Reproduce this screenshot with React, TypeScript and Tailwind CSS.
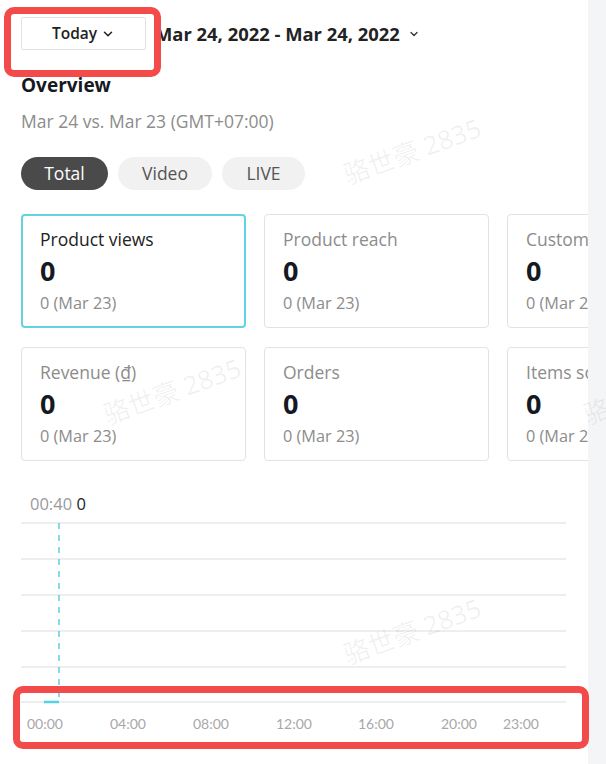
import { ChevronDown } from "lucide-react";

const cards = [
  [
    { title: "Product views", active: true },
    { title: "Product reach" },
    { title: "Customers" },
  ],
  [{ title: "Revenue (₫)" }, { title: "Orders" }, { title: "Items sold" }],
];

const ticks = [
  { label: "00:00", x: 24 },
  { label: "04:00", x: 107 },
  { label: "08:00", x: 190 },
  { label: "12:00", x: 273 },
  { label: "16:00", x: 355 },
  { label: "20:00", x: 438 },
  { label: "23:00", x: 500 },
];

const grid = [8, 44, 80, 116, 152, 187];

function MetricCard({ title, active }: { title: string; active?: boolean }) {
  return (
    <div
      className={
        "w-[225px] h-[114px] shrink-0 rounded-[4px] bg-white " +
        (active ? "border-2 border-[#63d3e2] pl-[17px] pt-[12px]" : "border border-[#e2e2e4] pl-[18px] pt-[13px]")
      }
    >
      <div className={"text-[17.5px] leading-[22px] whitespace-nowrap " + (active ? "text-[#222]" : "text-[#8c8c8c]")}>
        {title}
      </div>
      <div className="mt-[6px] text-[27px] leading-[30px] font-bold text-[#161823]">0</div>
      <div className="mt-[6px] text-[16.3px] leading-[22px] text-[#8c8c8c] whitespace-nowrap">0 (Mar 23)</div>
    </div>
  );
}

function Watermark({ className }: { className: string }) {
  return (
    <div
      className={
        "absolute pointer-events-none whitespace-nowrap -rotate-[20deg] text-[26px] leading-none text-black/[0.06] font-['Noto_Sans','Noto_Sans_CJK_SC',sans-serif] " +
        className
      }
    >
      骆世豪 2835
    </div>
  );
}

export default function App() {
  return (
    <div className="relative w-[606px] h-[764px] flex overflow-hidden bg-white font-['Open_Sans','Noto_Sans_CJK_SC',sans-serif]">
      <main className="w-[588px] shrink-0 overflow-hidden pl-[21px] pt-[17px]">
        <div className="flex items-center">
          <button className="w-[125px] h-[33px] flex items-center justify-center gap-[4px] border border-[#e3e3e5] rounded-[2px] bg-white text-[15.5px] font-semibold text-[#222]">
            Today
            <ChevronDown size={14} strokeWidth={2.6} />
          </button>
          <span className="ml-[9px] text-[18.4px] font-bold text-[#222] whitespace-nowrap">
            Mar 24, 2022 - Mar 24, 2022
          </span>
          <ChevronDown size={12} strokeWidth={2.6} className="ml-[8px] text-[#333]" />
        </div>

        <h2 className="mt-[23px] text-[19px] leading-[24px] font-bold text-[#161823]">Overview</h2>
        <p className="mt-[13px] text-[17.5px] leading-[22px] text-[#8c8c8c]">Mar 24 vs. Mar 23 (GMT+07:00)</p>

        <div className="mt-[25px] flex gap-[10px]">
          <span className="h-[33px] w-[87px] rounded-full bg-[#4a4a4a] text-white text-[17.5px] flex items-center justify-center">
            Total
          </span>
          <span className="h-[33px] w-[94px] rounded-full bg-[#f1f1f2] text-[#555] text-[17.5px] flex items-center justify-center">
            Video
          </span>
          <span className="h-[33px] w-[83px] rounded-full bg-[#f1f1f2] text-[#555] text-[17.5px] flex items-center justify-center">
            LIVE
          </span>
        </div>

        <div className="mt-[24px] flex flex-col gap-[19px]">
          {cards.map((row, i) => (
            <div key={i} className="flex gap-[18px]">
              {row.map((c) => (
                <MetricCard key={c.title} title={c.title} active={"active" in c ? c.active : false} />
              ))}
            </div>
          ))}
        </div>

        <div className="mt-[32px] ml-[9px] text-[16.5px] leading-[22px]">
          <span className="text-[#9a9a9a]">00:40</span> <span className="text-[#222]">0</span>
        </div>

        <svg width="567" height="240" className="block">
          {grid.map((y) => (
            <line key={y} x1="0" x2="545" y1={y} y2={y} stroke="#e9e9eb" strokeWidth="1.5" />
          ))}
          <line x1="38" x2="38" y1="8" y2="187" stroke="#5fd0e0" strokeWidth="1.5" strokeDasharray="6 6" />
          <line x1="23" x2="38" y1="187" y2="187" stroke="#4fd3e6" strokeWidth="2.5" />
          {ticks.map((t) => (
            <text
              key={t.label}
              x={t.x}
              y="214"
              textAnchor="middle"
              fontSize="14"
              fill="#a8a8a8"
              fontFamily="Lato, sans-serif"
            >
              {t.label}
            </text>
          ))}
        </svg>
      </main>
      <div className="flex-1 bg-[#f4f5f7]" />

      <Watermark className="left-[340px] top-[138px]" />
      <Watermark className="left-[-140px] top-[138px]" />
      <Watermark className="left-[100px] top-[378px]" />
      <Watermark className="left-[580px] top-[378px]" />
      <Watermark className="left-[340px] top-[618px]" />
      <Watermark className="left-[-140px] top-[618px]" />

      <div className="absolute left-[4px] top-[7px] w-[157px] h-[70px] border-[7px] border-[#f34a4a] rounded-[10px] pointer-events-none" />
      <div className="absolute left-[13px] top-[686px] w-[576px] h-[63px] border-[7px] border-[#f34a4a] rounded-[10px] pointer-events-none" />
    </div>
  );
}
